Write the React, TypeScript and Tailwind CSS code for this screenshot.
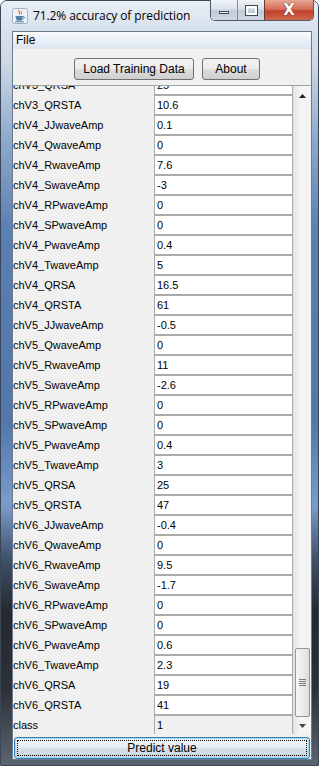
import React from "react";

const rows: [string, string][] = [
  ["chV3_QRSA", "25"],
  ["chV3_QRSTA", "10.6"],
  ["chV4_JJwaveAmp", "0.1"],
  ["chV4_QwaveAmp", "0"],
  ["chV4_RwaveAmp", "7.6"],
  ["chV4_SwaveAmp", "-3"],
  ["chV4_RPwaveAmp", "0"],
  ["chV4_SPwaveAmp", "0"],
  ["chV4_PwaveAmp", "0.4"],
  ["chV4_TwaveAmp", "5"],
  ["chV4_QRSA", "16.5"],
  ["chV4_QRSTA", "61"],
  ["chV5_JJwaveAmp", "-0.5"],
  ["chV5_QwaveAmp", "0"],
  ["chV5_RwaveAmp", "11"],
  ["chV5_SwaveAmp", "-2.6"],
  ["chV5_RPwaveAmp", "0"],
  ["chV5_SPwaveAmp", "0"],
  ["chV5_PwaveAmp", "0.4"],
  ["chV5_TwaveAmp", "3"],
  ["chV5_QRSA", "25"],
  ["chV5_QRSTA", "47"],
  ["chV6_JJwaveAmp", "-0.4"],
  ["chV6_QwaveAmp", "0"],
  ["chV6_RwaveAmp", "9.5"],
  ["chV6_SwaveAmp", "-1.7"],
  ["chV6_RPwaveAmp", "0"],
  ["chV6_SPwaveAmp", "0"],
  ["chV6_PwaveAmp", "0.6"],
  ["chV6_TwaveAmp", "2.3"],
  ["chV6_QRSA", "19"],
  ["chV6_QRSTA", "41"],
];

function JavaIcon() {
  return (
    <svg width="16" height="16" viewBox="0 0 16 16">
      <rect x="0.5" y="0.5" width="15" height="15" rx="2" fill="#eef2f7" stroke="#9fb0c4" />
      <path d="M7 2 C5.5 3.5 9 4.5 7.5 6.5" stroke="#e76f00" strokeWidth="1.2" fill="none" />
      <path d="M9.5 3 C8.5 4 10.5 4.8 9.3 6.3" stroke="#e76f00" strokeWidth="1" fill="none" />
      <path d="M3.5 8 L11 8 L10.2 11.5 C10 12.4 9.3 12.8 8.5 12.8 L6 12.8 C5.2 12.8 4.5 12.4 4.3 11.5 Z" fill="#5382a1" />
      <path d="M11 8.6 C13 8.4 13 10.8 10.6 11" stroke="#5382a1" strokeWidth="1" fill="none" />
      <path d="M3 13.8 L12 13.8" stroke="#5382a1" strokeWidth="1" />
    </svg>
  );
}

export default function App() {
  return (
    <div className="w-[325px] h-[774px] bg-white relative overflow-hidden font-['Liberation_Sans',Arial,sans-serif]">
      <div className="w-[319px] h-[766px] rounded-t-[7px] border border-[#3b4656] bg-[linear-gradient(180deg,#e2e9f1_0%,#cdd8e5_8%,#8eaacd_18%,#5a7fb2_30%,#5177ab_55%,#7a9ccb_66%,#40516a_73%,#25292f_80%,#2c3038_90%,#5c6470_100%)] flex flex-col relative">
        {/* Title bar */}
        <div className="h-[30px] flex items-start relative rounded-t-[6px] bg-[linear-gradient(180deg,#e8eef5_0%,#d7e1ec_100%)]">
          <div className="ml-[11px] mt-[7px]">
            <JavaIcon />
          </div>
          <div className="ml-[5px] mt-[7px] text-[12px] text-black leading-[16px] font-['Open_Sans',sans-serif] tracking-[-0.1px]">
            71.2% accuracy of prediction
          </div>
          {/* caption buttons */}
          <div className="absolute left-[209px] top-[-1px] flex h-[21px] border border-[#4f5c6e] border-t-0 rounded-b-[5px] overflow-hidden">
            <div className="w-[27px] h-full bg-[linear-gradient(180deg,#f1f4f8_0%,#d9e1ea_45%,#bfcbd8_55%,#d0dae6_100%)] border-r border-[#7f8b9a] flex items-center justify-center">
              <div className="w-[10px] h-[3px] bg-white border border-[#3d4957] mt-[5px]" />
            </div>
            <div className="w-[27px] h-full bg-[linear-gradient(180deg,#f1f4f8_0%,#d9e1ea_45%,#bfcbd8_55%,#d0dae6_100%)] border-r border-[#6d3a30] flex items-center justify-center">
              <div className="w-[11px] h-[9px] border-2 border-white outline outline-1 outline-[#3d4957] bg-transparent" />
            </div>
            <div className="w-[48px] h-full bg-[linear-gradient(180deg,#e8a893_0%,#d5705a_45%,#c0402a_55%,#d0664a_100%)] flex items-center justify-center">
              <span className="text-white font-bold text-[15px] leading-none font-['DejaVu_Sans',sans-serif] [text-shadow:0_0_1px_#5a1a10,0_0_1px_#5a1a10]">
                X
              </span>
            </div>
          </div>
        </div>

        {/* Client area */}
        <div className="ml-[11px] mr-[6px] flex flex-col border border-[#6b7a8c] bg-[#f0f0f0] h-[729px]">
          {/* menu bar */}
          <div className="h-[17px] bg-[linear-gradient(180deg,#fafcfe_0%,#e9eff7_50%,#dbe4f0_100%)] flex items-center">
            <span className="ml-[3px] text-[12px] leading-none text-black">File</span>
          </div>
          {/* toolbar */}
          <div className="h-[36px] flex items-start justify-center gap-[8px] pt-[9px] pl-[10px]">
            <button className="h-[22px] w-[120px] rounded-[3px] border border-[#707070] bg-[linear-gradient(180deg,#f2f2f2_0%,#ebebeb_50%,#dddddd_51%,#cfcfcf_100%)] text-[12px] text-black leading-none">
              Load Training Data
            </button>
            <button className="h-[22px] w-[58px] rounded-[3px] border border-[#707070] bg-[linear-gradient(180deg,#f2f2f2_0%,#ebebeb_50%,#dddddd_51%,#cfcfcf_100%)] text-[12px] text-black leading-none">
              About
            </button>
          </div>
          {/* table */}
          <div className="h-[651px] border-t border-[#a0a0a0] flex overflow-hidden">
            <div className="w-[280px] overflow-hidden">
              <div className="mt-[-10px] flex flex-col">
                {rows.map(([k, v]) => (
                  <div key={k} className="flex h-[20px]">
                    <div className="w-[141px] text-[11px] text-black leading-[19px] pl-[0px]">{k}</div>
                    <div className="w-[139px] bg-white border-l border-r border-b-2 border-[#ababab] text-[11px] leading-[18px] pl-[2px] text-black">
                      {v}
                    </div>
                  </div>
                ))}
                <div className="flex h-[20px]">
                  <div className="w-[141px] text-[11px] text-black leading-[19px]">class</div>
                  <div className="w-[139px] bg-[#f0f0f0] border-l border-r border-b-2 border-[#ababab] text-[11px] leading-[18px] pl-[2px] text-black">
                    1
                  </div>
                </div>
              </div>
            </div>
            {/* scrollbar */}
            <div className="w-[18px] flex flex-col bg-[linear-gradient(90deg,#e6e6e6_0%,#f4f4f4_40%,#f4f4f4_100%)] border-l border-[#e0e0e0]">
              <div className="h-[17px] flex items-center justify-center mt-[2px]">
                <svg width="7" height="4" viewBox="0 0 7 4">
                  <path d="M0 4 L3.5 0 L7 4 Z" fill="#222" />
                </svg>
              </div>
              <div className="flex-1" />
              <div className="mx-[1px] h-[69px] rounded-[2px] border border-[#969696] bg-[linear-gradient(90deg,#f7f7f7_0%,#ececec_50%,#dcdcdc_100%)] flex flex-col items-center justify-center gap-[1px]">
                <div className="w-[7px] h-[1px] bg-[#7a7a7a]" />
                <div className="w-[7px] h-[1px] bg-[#7a7a7a]" />
                <div className="w-[7px] h-[1px] bg-[#7a7a7a]" />
                <div className="w-[7px] h-[1px] bg-[#7a7a7a]" />
              </div>
              <div className="h-[17px] flex items-center justify-center">
                <svg width="7" height="4" viewBox="0 0 7 4">
                  <path d="M0 0 L3.5 4 L7 0 Z" fill="#444" />
                </svg>
              </div>
            </div>
          </div>
          {/* predict */}
          <div className="px-[1px] pt-[1px]">
            <button className="w-full h-[22px] rounded-[3px] border border-[#3c7fb1] bg-[linear-gradient(180deg,#f2f7fa_0%,#e5edf2_50%,#d4dfe6_51%,#c8d4dc_100%)] p-[2px] shadow-[inset_0_0_0_1px_#9fd9f5]">
              <div className="w-full h-full border border-dotted border-black flex items-center justify-center text-[12px] text-black leading-none">
                Predict value
              </div>
            </button>
          </div>
        </div>
      </div>
    </div>
  );
}
